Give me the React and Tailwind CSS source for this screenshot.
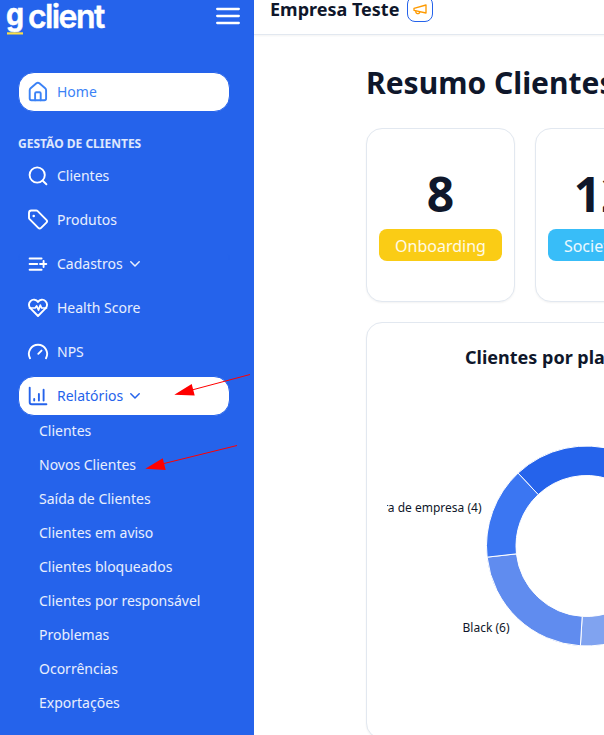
import React from "react";

const stroke = {
  fill: "none",
  stroke: "currentColor",
  strokeWidth: 1.9,
  strokeLinecap: "round",
  strokeLinejoin: "round",
};

const Icon = ({ children }) => (
  <svg viewBox="0 0 22 22" className="h-[22px] w-[22px] shrink-0" {...stroke}>
    {children}
  </svg>
);

const HomeIcon = () => (
  <Icon>
    <path d="M2.700 9.300q0-1.200.9-2l5.800-5q1.500-1.200 3 0l5.800 5q.9.800.9 2v8.200q0 1.700-1.700 1.700H4.400q-1.700 0-1.700-1.700z" />
    <path d="M8.100 19.200v-6.700q0-1.300 1.300-1.300h3q1.300 0 1.300 1.300v6.700" />
  </Icon>
);
const SearchIcon = () => (
  <Icon>
    <circle cx="10.200" cy="10" r="7.600" />
    <path d="m16 16 3.400 3.300" />
  </Icon>
);
const TagIcon = () => (
  <Icon>
    <path d="M2 4v4.700q0 .9.600 1.500l8.700 8.700q1.400 1.400 2.800 0l5.300-5.300q1.400-1.400 0-2.800l-8.700-8.700q-.6-.6-1.500-.6H4.300Q2 1.500 2 4z" />
    <circle cx="6.700" cy="6.900" r=".6" fill="currentColor" strokeWidth="1.300" />
  </Icon>
);
const ListPlusIcon = () => (
  <Icon>
    <path d="M2.600 5.500h12M2.600 11h7.700M2.600 16.700h12M13 11h6.300M16.600 8v6" />
  </Icon>
);
const HeartIcon = () => (
  <Icon>
    <path d="M11 4.900C9.200 2.300 5.700 1.900 3.500 4.100c-2.100 2.100-2.100 5.100 0 7.200L11 19l7.500-7.700c2.100-2.100 2.100-5.100 0-7.200-2.200-2.200-5.700-1.800-7.500.8z" />
    <path d="M2.500 11h5.600l1.500-2 2 4 1.700-5 1.300 3h4.900" strokeWidth="1.700" />
  </Icon>
);
const GaugeIcon = () => (
  <Icon>
    <path d="M3 17.200A9.100 9.100 0 1 1 19 17.200M11.300 12.800l3.200-3.200" />
  </Icon>
);
const ChartIcon = () => (
  <Icon>
    <path d="M2.700 2.600v14.700q0 2 2 2h14.700M7.200 15.600v-1.700M11.900 15.600V8.900M16.600 15.600V4.700" />
  </Icon>
);
const Chevron = () => (
  <svg viewBox="0 0 10 10" className="ml-[7px] h-2.5 w-2.5 shrink-0" {...stroke} strokeWidth="1.500">
    <path d="m.800 2.800 4.200 4.200 4.200-4.200" />
  </svg>
);

function NavItem({ icon, label, tone = "text-white/90", chevron }) {
  const active = tone !== "text-white/90";
  return (
    <li
      className={`flex h-10 items-center rounded-2xl border border-[#2563eb] pl-2 text-sm ${tone} ${active ? "bg-white" : ""}`}
    >
      <span className={`mr-2 flex ${active ? "" : "text-white"}`}>{icon}</span>
      {label}
      {chevron && <Chevron />}
    </li>
  );
}

const reports = [
  "Clientes",
  "Novos Clientes",
  "Saída de Clientes",
  "Clientes em aviso",
  "Clientes bloqueados",
  "Clientes por responsável",
  "Problemas",
  "Ocorrências",
  "Exportações",
];

function Sidebar() {
  return (
    <aside className="h-full w-[254px] shrink-0 overflow-hidden bg-[#2563eb]">
      <header className="flex h-[72px] items-start justify-between pr-3.5">
        <svg width="120" height="38" fill="white" stroke="white" fontFamily="Inter, sans-serif">
          <text x="6" y="24.500" fontSize="31" fontWeight="700" strokeWidth=".500" textLength="18" lengthAdjust="spacingAndGlyphs">g</text>
          <text x="28" y="27.700" fontSize="32" fontWeight="600" strokeWidth=".400" letterSpacing="-1.700" textLength="75.500" lengthAdjust="spacing">client</text>
          <rect x="7" y="32.300" width="16" height="2.200" fill="#fde047" stroke="none" />
        </svg>
        <svg width="24" height="32" stroke="white" strokeWidth="2.300" strokeLinecap="round">
          <path d="M1.200 9h21.600M1.200 16h21.600M1.200 23h21.600" />
        </svg>
      </header>
      <nav className="pr-6 pl-[18px]">
        <ul>
          <NavItem icon={<HomeIcon />} label="Home" tone="text-[#3b82f6]" />
        </ul>
        <h2 className="mt-6 mb-1 text-xs font-bold whitespace-nowrap text-white/85">GESTÃO DE CLIENTES</h2>
        <ul className="flex flex-col gap-1">
          <NavItem icon={<SearchIcon />} label="Clientes" />
          <NavItem icon={<TagIcon />} label="Produtos" />
          <NavItem icon={<ListPlusIcon />} label="Cadastros" chevron />
          <NavItem icon={<HeartIcon />} label="Health Score" />
          <NavItem icon={<GaugeIcon />} label="NPS" />
          <NavItem icon={<ChartIcon />} label="Relatórios" tone="text-[#2563eb]" chevron />
        </ul>
        <ul className="-mt-[2px] pl-[21px] text-sm text-white/90">
          {reports.map((label) => (
            <li key={label} className="flex h-[34px] items-center whitespace-nowrap">
              {label}
            </li>
          ))}
        </ul>
      </nav>
    </aside>
  );
}

function StatCard({ value, label, color }) {
  return (
    <div className="flex h-[174px] shrink-0 flex-col items-center rounded-2xl border border-slate-200 bg-white px-3 pt-10 shadow-xs">
      <div className="text-5xl leading-[50px] font-bold">{value}</div>
      <div className={`mt-[10px] flex h-8 items-center rounded-lg px-4 pt-0.5 text-base text-white/90 ${color}`}>
        {label}
      </div>
    </div>
  );
}

const point = (radius, degrees) => {
  const a = (degrees * Math.PI) / 180;
  return `${(199.5 + radius * Math.cos(a)).toFixed(2)} ${(150 + radius * Math.sin(a)).toFixed(2)}`;
};

const slice = (from, to) =>
  `M${point(100, from)}A100 100 0 0 1 ${point(100, to)}L${point(70.5, to)}A70.5 70.5 0 0 0 ${point(70.5, from)}Z`;

function Donut() {
  return (
    <svg width="400" height="320" fontSize="12" fill="#0f172a" className="overflow-hidden">
      <g stroke="white" strokeWidth="1">
        <path d={slice(-133.2, -10)} fill="#2563eb" />
        <path d={slice(-10, 93.500)} fill="#80a3f0" />
        <path d={slice(93.500, 173.600)} fill="#608cef" />
        <path d={slice(173.600, 226.800)} fill="#3b76f2" />
      </g>
      <text x="94.500" y="116" textAnchor="end">Carteira de empresa (4)</text>
      <text x="122.500" y="236" textAnchor="end">Black (6)</text>
    </svg>
  );
}

function Dashboard() {
  return (
    <main className="flex w-[700px] shrink-0 flex-col bg-white text-slate-900">
      <header className="flex h-[35px] shrink-0 items-start border-b border-slate-200 pl-4 shadow-xs">
        <span className="-mt-[5px] text-lg leading-7 font-bold whitespace-nowrap">Empresa Teste</span>
        <span className="-mt-1 ml-2 flex h-[26px] w-[26px] items-center justify-center rounded-lg border border-[#2563eb] text-amber-500">
          <svg viewBox="0 0 24 24" className="h-4 w-4" {...stroke} strokeWidth="2">
            <path d="m3 11 18-5v12L3 14v-3z" />
            <path d="M11.600 16.800a3 3 0 1 1-5.800-1.600" />
          </svg>
        </span>
      </header>
      <section className="ml-28 flex flex-col">
        <h1 className="mt-[30px] text-3xl leading-9 font-bold whitespace-nowrap">Resumo Clientes</h1>
        <div className="mt-[27px] flex gap-5">
          <StatCard value="8" label="Onboarding" color="bg-[#facc15]" />
          <StatCard value="12" label="Societário" color="bg-[#38bdf8]" />
        </div>
        <div className="mt-5 flex h-[417px] w-[442px] flex-col items-center rounded-2xl border border-slate-200 bg-white shadow-xs">
          <h2 className="mt-5 w-[244px] text-lg leading-7 font-bold whitespace-nowrap">Clientes por plano</h2>
          <div className="mt-[25px]">
            <Donut />
          </div>
        </div>
      </section>
    </main>
  );
}

export default function App() {
  return (
    <div className="relative flex h-[735px] w-[604px] overflow-hidden bg-white font-['Noto_Sans',sans-serif]">
      <Sidebar />
      <Dashboard />
      <svg className="pointer-events-none absolute top-0 left-0" width="254" height="735" fill="red">
        <path d="M250 374.500 190 390.500M237 445.500 162 464" stroke="red" />
        <path d="m174.300 394.700 17.400-10.700 3 11.500zM145.300 468.800l17.400-10.500 3 11.600z" />
      </svg>
    </div>
  );
}
